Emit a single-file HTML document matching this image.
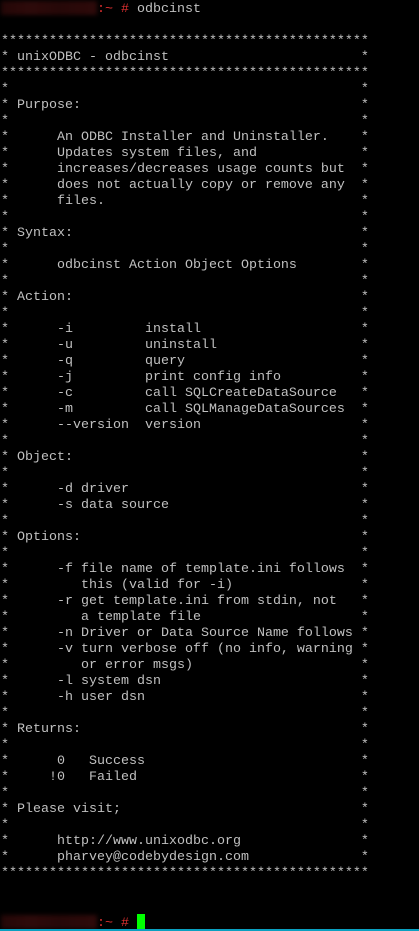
<!DOCTYPE html>
<html><head><meta charset="utf-8"><style>
html,body{margin:0;padding:0;background:#000;width:419px;height:931px;overflow:hidden;position:relative}
pre{position:absolute;left:1px;top:1px;margin:0;font-family:"Liberation Mono",monospace;font-size:13.33px;line-height:16px;color:#c0c0c0;white-space:pre}
.r{color:#e03030}
.blur{display:inline-block;width:96px;height:14px;vertical-align:-3px;background:linear-gradient(90deg,#240707,#2e0a0a 30%,#260808 60%,#2e0a0a);filter:blur(2px)}
.cur{display:inline-block;width:8px;height:16px;background:#00ff00;vertical-align:-4px}
.bar{position:absolute;left:0;bottom:0;width:419px;height:2px;background:#0aa0c0}
</style></head><body>
<pre><span class="blur"></span><span class="r">:~ #</span> odbcinst

**********************************************
* unixODBC - odbcinst                        *
**********************************************
*                                            *
* Purpose:                                   *
*                                            *
*      An ODBC Installer and Uninstaller.    *
*      Updates system files, and             *
*      increases/decreases usage counts but  *
*      does not actually copy or remove any  *
*      files.                                *
*                                            *
* Syntax:                                    *
*                                            *
*      odbcinst Action Object Options        *
*                                            *
* Action:                                    *
*                                            *
*      -i         install                    *
*      -u         uninstall                  *
*      -q         query                      *
*      -j         print config info          *
*      -c         call SQLCreateDataSource   *
*      -m         call SQLManageDataSources  *
*      --version  version                    *
*                                            *
* Object:                                    *
*                                            *
*      -d driver                             *
*      -s data source                        *
*                                            *
* Options:                                   *
*                                            *
*      -f file name of template.ini follows  *
*         this (valid for -i)                *
*      -r get template.ini from stdin, not   *
*         a template file                    *
*      -n Driver or Data Source Name follows *
*      -v turn verbose off (no info, warning *
*         or error msgs)                     *
*      -l system dsn                         *
*      -h user dsn                           *
*                                            *
* Returns:                                   *
*                                            *
*      0   Success                           *
*     !0   Failed                            *
*                                            *
* Please visit;                              *
*                                            *
*      http://www.unixodbc.org               *
*      pharvey@codebydesign.com              *
**********************************************


<span class="blur"></span><span class="r">:~ #</span> <span class="cur"></span></pre>
<div class="bar"></div>
</body></html>
